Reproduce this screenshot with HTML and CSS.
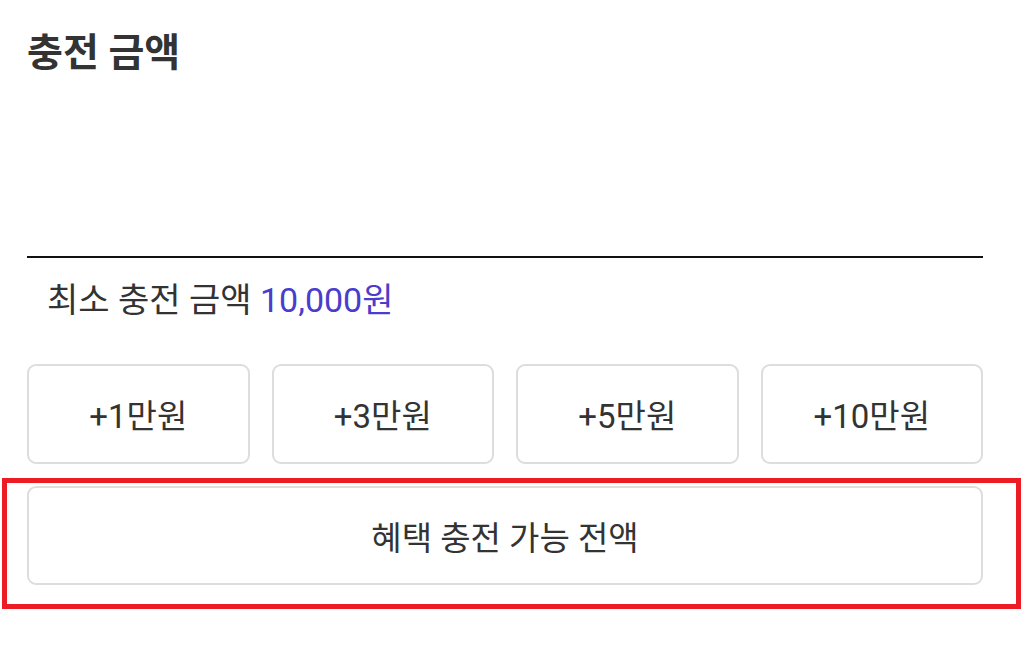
FILE: index.html
```html
<!DOCTYPE html>
<html lang="ko">
<head>
    <meta charset="UTF-8">
    <meta name="viewport" content="width=device-width, initial-scale=1.0">
    <title>충전 금액</title>
    <link rel="stylesheet" href="styles.css">
</head>
<body>
    <div class="container">
        <h1 class="title">충전 금액</h1>

        <div class="amount-input"></div>

        <p class="min-amount">최소 충전 금액 <span class="accent">10,000원</span></p>

        <div class="quick-buttons">
            <button class="button">+1만원</button>
            <button class="button">+3만원</button>
            <button class="button">+5만원</button>
            <button class="button">+10만원</button>
        </div>

        <button class="button button-full">혜택 충전 가능 전액</button>
    </div>

    <div class="highlight"></div>
</body>
</html>
```

FILE: styles.css
```css
body {
    margin: 0;
    background: #fff;
    font-family: Roboto, "Noto Sans CJK KR", sans-serif;
    color: #333;
}
.container {
    width: 956px;
    padding: 24px 0 0 27px;
}
.title {
    margin: 0;
    font-size: 39px;
    font-weight: 700;
    line-height: 58px;
    color: #333;
}
.amount-input {
    height: 174px;
    border-bottom: 2px solid #111;
}
.min-amount {
    margin: 20px 0 0 20px;
    font-size: 34px;
    line-height: 44px;
}
.accent {
    color: #4a3ccc;
}
.quick-buttons {
    display: grid;
    grid-template-columns: repeat(4, 1fr);
    gap: 22px;
    margin-top: 42px;
}
.button {
    height: 100px;
    background: #fff;
    border: 2px solid #ddd;
    border-radius: 9px;
    font-family: inherit;
    font-size: 33px;
    color: #333;
}
.button-full {
    display: block;
    width: 100%;
    height: 99px;
    margin-top: 22px;
}
.highlight {
    position: absolute;
    left: 2px;
    top: 478px;
    width: 1009px;
    height: 121px;
    border: 5px solid #ed1c24;
}
```
